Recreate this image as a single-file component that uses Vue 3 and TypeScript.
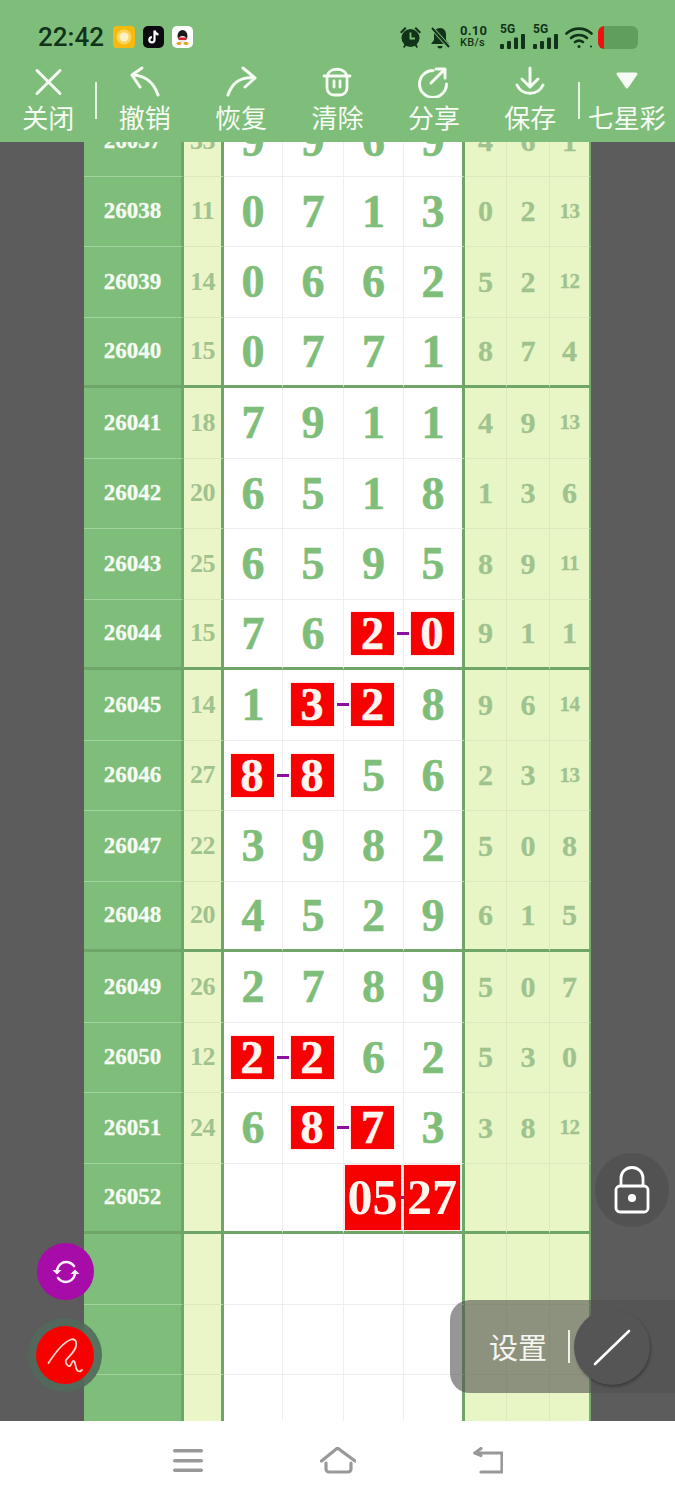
<script setup lang="ts">
type Row = {
  id: string;
  sum: string;
  nums: string[];
  hot?: number[];
  big?: boolean;
  rest: string[];
};

const rows: Row[] = [
  { id: "26037", sum: "33", nums: ["9", "9", "6", "9"], rest: ["4", "6", "1"] },
  { id: "26038", sum: "11", nums: ["0", "7", "1", "3"], rest: ["0", "2", "13"] },
  { id: "26039", sum: "14", nums: ["0", "6", "6", "2"], rest: ["5", "2", "12"] },
  { id: "26040", sum: "15", nums: ["0", "7", "7", "1"], rest: ["8", "7", "4"] },
  { id: "26041", sum: "18", nums: ["7", "9", "1", "1"], rest: ["4", "9", "13"] },
  { id: "26042", sum: "20", nums: ["6", "5", "1", "8"], rest: ["1", "3", "6"] },
  { id: "26043", sum: "25", nums: ["6", "5", "9", "5"], rest: ["8", "9", "11"] },
  { id: "26044", sum: "15", nums: ["7", "6", "2", "0"], hot: [2, 3], rest: ["9", "1", "1"] },
  { id: "26045", sum: "14", nums: ["1", "3", "2", "8"], hot: [1, 2], rest: ["9", "6", "14"] },
  { id: "26046", sum: "27", nums: ["8", "8", "5", "6"], hot: [0, 1], rest: ["2", "3", "13"] },
  { id: "26047", sum: "22", nums: ["3", "9", "8", "2"], rest: ["5", "0", "8"] },
  { id: "26048", sum: "20", nums: ["4", "5", "2", "9"], rest: ["6", "1", "5"] },
  { id: "26049", sum: "26", nums: ["2", "7", "8", "9"], rest: ["5", "0", "7"] },
  { id: "26050", sum: "12", nums: ["2", "2", "6", "2"], hot: [0, 1], rest: ["5", "3", "0"] },
  { id: "26051", sum: "24", nums: ["6", "8", "7", "3"], hot: [1, 2], rest: ["3", "8", "12"] },
  { id: "26052", sum: "", nums: ["", "", "05", "27"], hot: [2, 3], big: true, rest: ["", "", ""] },
  { id: "", sum: "", nums: ["", "", "", ""], rest: ["", "", ""] },
  { id: "", sum: "", nums: ["", "", "", ""], rest: ["", "", ""] },
  { id: "", sum: "", nums: ["", "", "", ""], rest: ["", "", ""] },
];

const tools = ["关闭", "撤销", "恢复", "清除", "分享", "保存", "七星彩"];

function isHot(row: Row, i: number): boolean {
  return !!row.hot && row.hot.includes(i);
}

function isLinked(row: Row, i: number): boolean {
  return !!row.hot && row.hot[0] === i;
}
</script>

<template>
  <div class="screen">
    <header class="top">
      <div class="status">
        <span class="time">22:42</span>
        <div class="apps">
          <svg width="22" height="22" viewBox="0 0 22 22">
            <rect width="22" height="22" rx="4" fill="#f5b90f" />
            <circle cx="11" cy="11" r="7.5" fill="#fbd65a" />
            <circle cx="11" cy="11" r="4.5" fill="#fff3c4" />
          </svg>
          <svg width="21" height="22" viewBox="0 0 21 22">
            <rect width="21" height="22" rx="5" fill="#0a0a0f" />
            <path d="M11.5 4.5v9.2a2.6 2.6 0 1 1-2.6-2.6M11.5 4.5c.3 2.3 1.7 3.7 4 4" fill="none" stroke="#fff" stroke-width="2.2" />
          </svg>
          <svg width="21" height="22" viewBox="0 0 21 22">
            <rect width="21" height="22" rx="5" fill="#fff" />
            <ellipse cx="10.5" cy="10" rx="5" ry="6" fill="#1a1a1a" />
            <ellipse cx="10.5" cy="13.5" rx="4" ry="3.5" fill="#e8e8e8" />
            <path d="M6 11.5h9l-1 2.5H7z" fill="#d8202a" />
            <ellipse cx="7" cy="17.5" rx="2.6" ry="1.4" fill="#e8a020" />
            <ellipse cx="14" cy="17.5" rx="2.6" ry="1.4" fill="#e8a020" />
          </svg>
        </div>
        <div class="sys">
          <svg width="23" height="24" viewBox="0 0 23 24" fill="#10331a">
            <circle cx="11.5" cy="13" r="9" />
            <path d="M1 7l5-5 1.500 1.500-5 5zM22 7l-5-5-1.500 1.500 5 5zM4 22l2-3 1.500 1-2 3zM19 22l-2-3-1.500 1 2 3z" />
            <path d="M11.500 7.500v6h4.500" fill="none" stroke="#7fbe7a" stroke-width="1.800" />
          </svg>
          <svg width="21" height="23" viewBox="0 0 21 23" fill="#10331a">
            <path d="M10 2c4 0 6 3 6 7v5l3 4H1l3-4V9c0-4 2-7 6-7zM7.500 20h5a2.500 2.500 0 0 1-5 0z" />
            <path d="M2 2l17 19" stroke="#7fbe7a" stroke-width="4" />
            <path d="M2 2l17 19" stroke="#10331a" stroke-width="2" />
          </svg>
          <div class="rate"><span>0.10</span><span class="unit">KB/s</span></div>
          <div class="signal" v-for="n in 2" :key="n">
            <span class="five">5G</span>
            <svg width="25" height="15" viewBox="0 0 25 15" fill="#10331a">
              <rect x="0" y="10" width="4" height="5" rx="1" />
              <rect x="7" y="7" width="4" height="8" rx="1" />
              <rect x="14" y="3.500" width="4" height="11.500" rx="1" />
              <rect x="21" y="0" width="4" height="15" rx="1" />
            </svg>
          </div>
          <svg class="wifi" width="28" height="24" viewBox="0 0 28 24" fill="none" stroke="#10331a" stroke-width="2.600" stroke-linecap="round">
            <path d="M1.500 8.500C8.500 2 19.500 2 26.500 8.500" />
            <path d="M6 13c4.500-4 11.500-4 16 0" />
            <path d="M10 17c2.500-1.800 5.500-1.800 8 0" />
            <circle cx="14" cy="21.500" r="1.500" fill="#10331a" stroke="none" />
            <circle cx="26" cy="21.500" r="1" fill="#10331a" stroke="none" />
          </svg>
          <div class="battery"><span class="charge"></span></div>
        </div>
      </div>
      <nav class="tools">
        <button v-for="(t, i) in tools" :key="t" type="button" class="tool" :class="{ split: i === 0 || i === 5 }">
          <svg class="tool-icon" width="36" height="32" viewBox="0 0 36 32" fill="none" stroke="#f6fbf4" stroke-width="3" stroke-linecap="round" stroke-linejoin="round">
            <path v-if="i === 0" d="M7 4.500l23 23M30 4.500l-23 23" />
            <path v-else-if="i === 1" d="M15 2L5 9l8 12M5 9c13 0 22 8 26 20" />
            <path v-else-if="i === 2" d="M20 2l12 10-10 9M32 12C18 10 9 17 5 29" />
            <g v-else-if="i === 3" stroke-width="2.800">
              <path d="M8 10C10 1 26 1 28 10M5 10H31" />
              <path d="M8 10V22a7 7 0 0 0 7 7h6a7 7 0 0 0 7-7V10" />
              <path d="M15 15v6M21 15v6" />
            </g>
            <g v-else-if="i === 4">
              <path d="M17 4.500a13.500 13.500 0 1 0 13.500 13.500" />
              <path d="M15 17L29 3M20 3h9v9" />
            </g>
            <g v-else-if="i === 5">
              <path d="M18 2v19M10 13l8 8 8-8" />
              <path d="M5 19c5 11 21 11 26 0" />
            </g>
            <path v-else d="M9 8h18l-9 13z" fill="#f6fbf4" />
          </svg>
          <span class="tool-label">{{ t }}</span>
        </button>
      </nav>
    </header>

    <main class="stage">
      <div class="sheet">
        <div v-for="(row, r) in rows" :key="r" class="row" :class="{ end: r % 4 === 3 }">
          <div class="cell c-id">{{ row.id }}</div>
          <div class="cell c-sum">{{ row.sum }}</div>
          <div v-for="(n, i) in row.nums" :key="i" class="cell c-num">
            <span v-if="isHot(row, i)" class="hot" :class="{ big: row.big, link: isLinked(row, i) }">{{ n }}</span>
            <template v-else>{{ n }}</template>
          </div>
          <div v-for="(v, i) in row.rest" :key="i" class="cell c-rest" :class="{ small: v.length > 1 }">{{ v }}</div>
        </div>
      </div>
    </main>

    <footer class="nav">
      <svg width="30" height="26" viewBox="0 0 30 26" fill="#999">
        <rect y="1" width="30" height="3.500" rx="1.700" />
        <rect y="11" width="30" height="3.500" rx="1.700" />
        <rect y="20.500" width="30" height="3.500" rx="1.700" />
      </svg>
      <svg width="36" height="28" viewBox="0 0 36 28" fill="none" stroke="#999" stroke-width="3.200" stroke-linecap="round" stroke-linejoin="round">
        <path d="M1.500 14L17.500 1 35 14" />
        <path d="M6 16v6a3 3 0 0 0 3 3h19a3 3 0 0 0 3-3v-6" />
      </svg>
      <svg width="30" height="28" viewBox="0 0 30 28" fill="none" stroke="#999" stroke-width="3.200" stroke-linecap="round" stroke-linejoin="round">
        <path d="M2 6h27v19H8" />
        <path d="M8 1.500L2 6l6 2.500" />
      </svg>
    </footer>

    <button type="button" class="fab fab-sync">
      <svg width="32" height="32" viewBox="0 0 32 32" fill="none" stroke="#fbeefb" stroke-width="2.600" stroke-linecap="round">
        <path d="M7 14c1-5 5-8 9-8 3.500 0 6 1.500 8 4" />
        <path d="M25 18c-1 5-5 8-9 8-3.500 0-6-1.500-8-4" />
        <path d="M2.500 14h9l-4.500 4.500zM20.500 18h9L25 13.500z" fill="#fbeefb" stroke="none" />
      </svg>
    </button>
    <div class="fab-ring">
      <button type="button" class="fab-pen">
        <svg width="36" height="38" viewBox="0 0 36 38" fill="none" stroke="#ffd9cf" stroke-width="1.800" stroke-linecap="round" stroke-linejoin="round">
          <path d="M1.500 27C8 17 17 6 24 3.500 28 2.500 30 5 29 10 28 16 22 20 19 24 18 27 21 31 23 30 25 28 25 24 27 25 29 27 28 33 31 35 33 36 34 35 35 34" />
        </svg>
      </button>
    </div>
    <button type="button" class="lock">
      <svg width="36" height="48" viewBox="0 0 36 48" fill="none" stroke="#fff" stroke-width="2.800">
        <path d="M7 20v-8a11 10.500 0 0 1 22 0v8" />
        <rect x="2" y="20" width="32" height="26" rx="4" />
        <circle cx="18" cy="32" r="4" fill="#fff" stroke="none" />
      </svg>
    </button>
    <div class="dock">
      <span class="dock-label">设置</span>
      <span class="dock-bar"></span>
      <button type="button" class="dock-btn">
        <svg width="40" height="40" viewBox="0 0 40 40" stroke="#fff" stroke-width="2.600" stroke-linecap="round">
          <path d="M3 37L37 4" />
        </svg>
      </button>
    </div>
  </div>
</template>

<style>
html,
body {
  margin: 0;
  background: #fff;
}
</style>

<style scoped>
.screen {
  position: relative;
  display: flex;
  flex-direction: column;
  width: 675px;
  height: 1500px;
  overflow: hidden;
  font-family: "Noto Sans CJK SC", "Noto Sans", sans-serif;
}
button {
  padding: 0;
  border: 0;
  background: none;
  color: inherit;
  font: inherit;
}
.top {
  height: 142px;
  flex: none;
  background: #7fbe7a;
  position: relative;
  z-index: 1;
}
.status {
  display: flex;
  align-items: center;
  height: 58px;
  padding: 8px 37px 0 38px;
}
.time {
  font: 500 26px/1 Roboto, sans-serif;
  color: #10331a;
}
.apps {
  display: flex;
  align-items: center;
  gap: 8px;
  margin-left: 9px;
}
.apps svg {
  display: block;
}
.sys {
  display: flex;
  align-items: center;
  margin-left: auto;
  gap: 8px;
}
.rate {
  display: flex;
  flex-direction: column;
  font: 700 13px/12px Roboto, sans-serif;
  color: #10331a;
  width: 28px;
  margin: 0 4px 0 1px;
  letter-spacing: 0.3px;
}
.rate .unit {
  font-size: 11px;
  font-weight: 500;
}
.signal {
  position: relative;
  display: flex;
  align-items: flex-end;
  height: 24px;
}
.five {
  position: absolute;
  left: 0;
  top: -2px;
  font: 700 12px/1 Roboto, sans-serif;
  color: #10331a;
}
.wifi {
  margin-left: -1px;
}
.battery {
  width: 40px;
  height: 23px;
  margin-left: -3px;
  border-radius: 6px;
  background: #5f9e5b;
  overflow: hidden;
}
.charge {
  display: block;
  width: 6px;
  height: 100%;
  border-radius: 6px 0 0 6px;
  background: #f01010;
}
.tools {
  display: grid;
  grid-template-columns: repeat(7, 1fr);
}
.tool {
  position: relative;
  display: flex;
  flex-direction: column;
  align-items: center;
  height: 76px;
}
.tool.split::after {
  content: "";
  position: absolute;
  right: -1px;
  top: 16px;
  width: 2px;
  height: 37px;
  background: #e6f4e3;
}
.tool-icon {
  display: block;
  flex: none;
}
.tool-label {
  margin-top: 1px;
  font-size: 26px;
  line-height: 36px;
  font-weight: 400;
  color: #f6fbf4;
  white-space: nowrap;
}
.stage {
  flex: 1;
  min-height: 0;
  overflow: hidden;
  background: #5c5c5c;
}
.sheet {
  width: 507px;
  margin: -36px 0 0 84px;
  font-family: "Liberation Serif", "Noto Serif", serif;
  font-weight: 700;
}
.row {
  display: grid;
  grid-template-columns: 100px 40px 59px 61px 60px 61px 42px 43px 41px;
  height: 70.5px;
}
.cell {
  display: flex;
  align-items: center;
  justify-content: center;
  box-sizing: border-box;
  border-bottom: 1px solid #eee;
}
.c-id {
  background: #7fbe7a;
  border-bottom-color: #a2d49e;
  border-right: 3px solid #6fa566;
  color: #f6fbf2;
  font-size: 23px;
  -webkit-text-stroke: 0.3px #f6fbf2;
}
.c-sum {
  background: #eaf5c8;
  border-bottom-color: #dde8bc;
  border-right: 3px solid #6fa566;
  color: #a0c38e;
  font-size: 26px;
  letter-spacing: -0.5px;
}
.c-num {
  background: #fff;
  border-right: 1px solid #eee;
  color: #7fbe7a;
  font-size: 46px;
  -webkit-text-stroke: 0.6px currentColor;
}
.c-num:nth-child(6) {
  border-right: 3px solid #6fa566;
}
.c-rest {
  background: #e8f6c6;
  border-bottom-color: #dde9bb;
  border-right: 1px solid #dde9bb;
  color: #a0c38e;
  font-size: 30px;
  -webkit-text-stroke: 0.3px currentColor;
}
.c-rest.small {
  font-size: 21px;
  letter-spacing: -0.5px;
}
.c-rest:last-child {
  border-right: 2px solid #7aae70;
}
.row.end .cell {
  border-bottom: 3px solid #6fa566;
}
.hot {
  position: relative;
  display: flex;
  align-items: center;
  justify-content: center;
  width: 43px;
  height: 43px;
  margin-right: 2px;
  background: #f70000;
  color: #fff6f0;
  box-shadow: 0 0 2px rgba(255, 60, 60, 0.35);
}
.hot.big {
  width: 56px;
  height: 65px;
  font-size: 50px;
  -webkit-text-stroke: 0;
}
.hot.link::after {
  content: "";
  position: absolute;
  left: 46px;
  top: 20px;
  width: 12px;
  height: 3px;
  background: #8c0fa0;
}
.hot.big.link::after {
  left: 56px;
  top: 31px;
  width: 4px;
}
.nav {
  height: 79px;
  flex: none;
  display: flex;
  align-items: center;
  justify-content: center;
  gap: 117px;
  background: #fff;
}
.nav svg {
  display: block;
}
.fab,
.fab-pen,
.lock,
.dock-btn {
  display: flex;
  align-items: center;
  justify-content: center;
}
.fab-sync {
  position: absolute;
  left: 37px;
  top: 1243px;
  width: 57px;
  height: 57px;
  border-radius: 50%;
  background: #a80ca8;
  z-index: 2;
}
.fab-ring {
  position: absolute;
  left: 28px;
  top: 1318px;
  display: flex;
  align-items: center;
  justify-content: center;
  width: 74px;
  height: 74px;
  border-radius: 50%;
  background: rgba(82, 104, 90, 0.9);
  z-index: 2;
}
.fab-pen {
  width: 58px;
  height: 58px;
  border-radius: 50%;
  background: #f70000;
}
.lock {
  position: absolute;
  left: 595px;
  top: 1153px;
  width: 74px;
  height: 74px;
  border-radius: 50%;
  background: #525252;
  z-index: 2;
}
.dock {
  position: absolute;
  left: 450px;
  top: 1300px;
  display: flex;
  align-items: center;
  box-sizing: border-box;
  width: 225px;
  height: 93px;
  padding-left: 39px;
  border-radius: 20px 0 0 20px;
  background: rgba(80, 80, 80, 0.6);
  z-index: 2;
}
.dock-label {
  font-size: 29px;
  line-height: 1;
  color: #f6f6f0;
}
.dock-bar {
  width: 2px;
  height: 33px;
  margin-left: 21px;
  background: #f0f0ea;
}
.dock-btn {
  width: 76px;
  height: 76px;
  margin-left: 4px;
  border-radius: 50%;
  background: #555;
  box-shadow: 1px 2px 3px rgba(0, 0, 0, 0.3);
}
</style>
